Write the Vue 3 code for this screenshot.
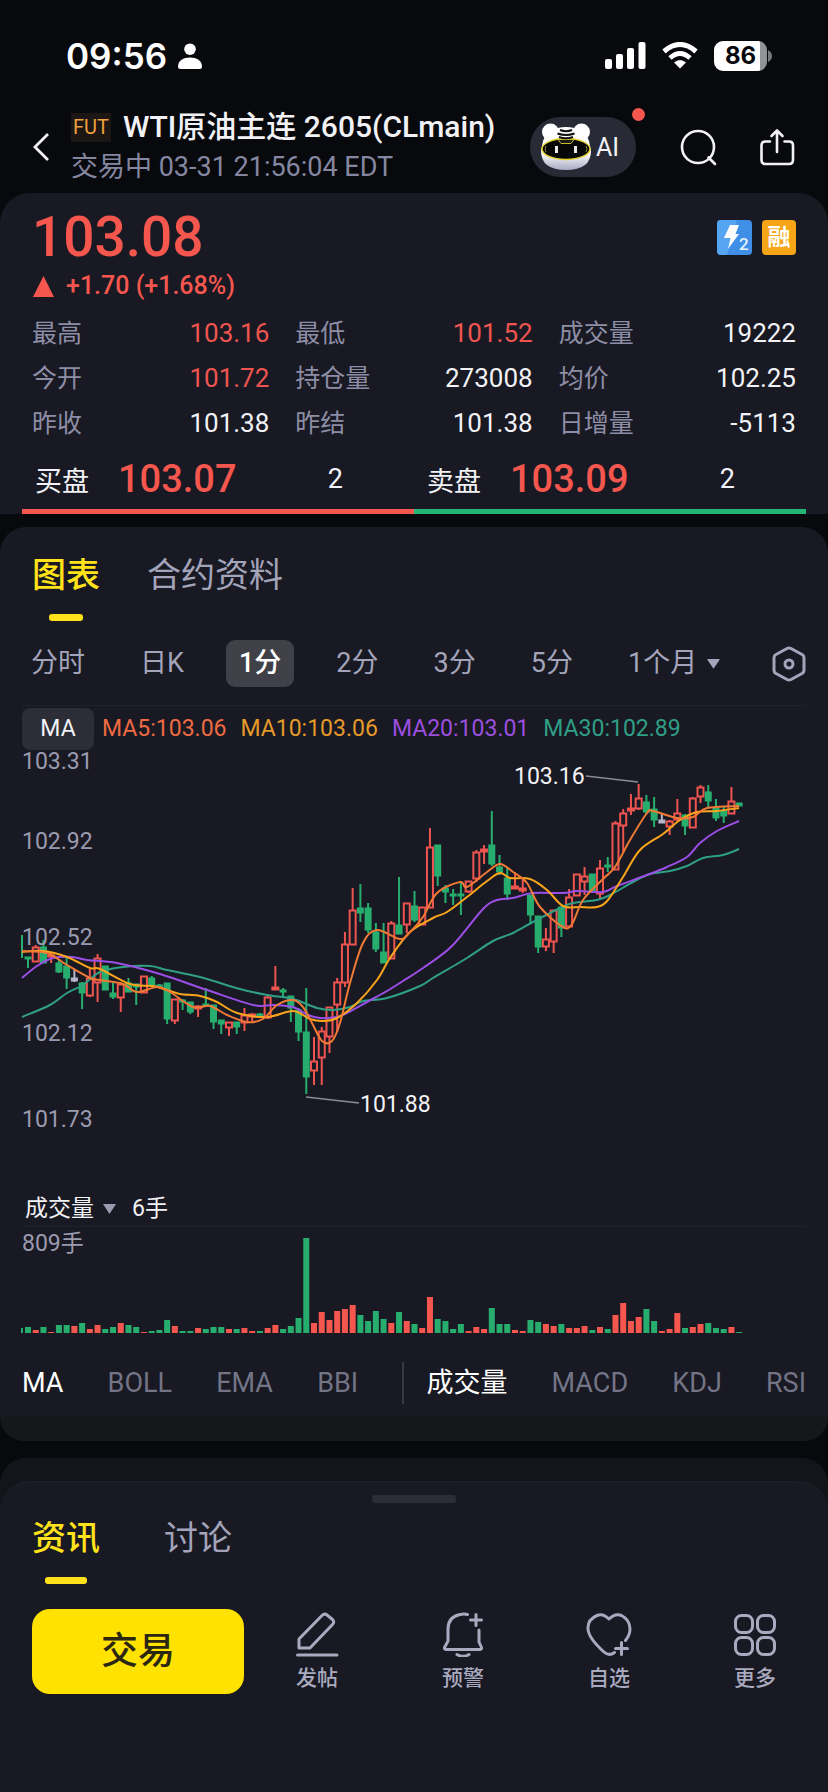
<script setup>
import { ref } from 'vue'

const stats = [
  { label: '最高', value: '103.16', up: true },
  { label: '最低', value: '101.52', up: true },
  { label: '成交量', value: '19222' },
  { label: '今开', value: '101.72', up: true },
  { label: '持仓量', value: '273008' },
  { label: '均价', value: '102.25' },
  { label: '昨收', value: '101.38' },
  { label: '昨结', value: '101.38' },
  { label: '日增量', value: '-5113' }
]

const periods = ['分时', '日K', '1分', '2分', '3分', '5分']
const period = ref('1分')
const longPeriod = ref('1个月')
const chartTab = ref('图表')
const feedTab = ref('资讯')
const subChart = ref('成交量')

const legend = [
  { name: 'ma5', text: 'MA5:103.06' },
  { name: 'ma10', text: 'MA10:103.06' },
  { name: 'ma20', text: 'MA20:103.01' },
  { name: 'ma30', text: 'MA30:102.89' }
]

const axis = [
  { y: 769, text: '103.31' },
  { y: 849, text: '102.92' },
  { y: 945, text: '102.52' },
  { y: 1041, text: '102.12' },
  { y: 1127, text: '101.73' }
]

// colour, high, body top, body bottom, low, volume bar height
const rows = [
  ['g', 957, 957, 959, 968, 6], ['r', 945, 947, 962, 962, 3], ['g', 940, 947, 963, 963, 6],
  ['r', 953, 955, 957, 963, 1], ['g', 960, 963, 972, 973, 8], ['g', 958, 966, 978, 989, 8],
  ['w', 969, 978, 981, 982, 7], ['g', 982, 983, 993, 1009, 10], ['r', 969, 978, 996, 997, 4],
  ['r', 954, 958, 983, 1002, 8], ['g', 966, 966, 990, 990, 4], ['g', 981, 993, 997, 999, 6],
  ['r', 982, 984, 998, 1012, 10], ['g', 978, 983, 992, 992, 8], ['g', 984, 984, 987, 1005, 6],
  ['r', 976, 976, 993, 993, 1], ['g', 976, 978, 985, 986, 2], ['g', 984, 985, 987, 988, 3],
  ['g', 983, 983, 1019, 1024, 13], ['r', 999, 999, 1021, 1024, 7], ['g', 999, 1000, 1002, 1010, 2],
  ['g', 1002, 1002, 1012, 1014, 2], ['r', 1005, 1006, 1009, 1017, 5], ['g', 988, 1004, 1006, 1006, 4],
  ['g', 1005, 1005, 1022, 1029, 6], ['g', 1020, 1020, 1024, 1034, 6], ['r', 1022, 1022, 1028, 1036, 4],
  ['g', 1022, 1022, 1027, 1034, 4], ['r', 1008, 1015, 1023, 1031, 5], ['r', 1013, 1014, 1017, 1021, 2],
  ['g', 1013, 1014, 1016, 1017, 2], ['r', 994, 997, 1018, 1019, 5], ['r', 966, 987, 990, 990, 8],
  ['g', 988, 990, 992, 997, 4], ['g', 996, 996, 1008, 1022, 7], ['g', 1008, 1010, 1032, 1041, 15],
  ['g', 988, 1032, 1077, 1094, 95], ['r', 1037, 1061, 1071, 1085, 10], ['r', 1027, 1031, 1058, 1085, 21],
  ['r', 1007, 1007, 1037, 1053, 13], ['r', 978, 982, 1005, 1032, 22], ['r', 932, 944, 983, 987, 24],
  ['r', 888, 910, 945, 945, 28], ['g', 884, 908, 913, 922, 18], ['g', 903, 908, 930, 933, 12],
  ['g', 923, 932, 949, 952, 22], ['g', 923, 952, 963, 963, 14], ['r', 921, 923, 959, 959, 10],
  ['g', 877, 925, 934, 934, 21], ['r', 903, 903, 925, 933, 12], ['g', 891, 906, 920, 922, 9],
  ['r', 907, 907, 925, 925, 5], ['r', 828, 847, 908, 908, 36], ['g', 845, 845, 876, 886, 14],
  ['g', 885, 888, 892, 903, 12], ['g', 889, 894, 896, 905, 4], ['g', 883, 894, 896, 915, 9],
  ['r', 881, 881, 892, 893, 2], ['r', 850, 852, 879, 882, 6], ['r', 845, 849, 852, 864, 4],
  ['g', 811, 845, 864, 866, 25], ['g', 855, 867, 872, 875, 9], ['g', 867, 878, 894, 900, 9],
  ['r', 872, 886, 889, 889, 3], ['r', 878, 888, 891, 893, 2], ['g', 895, 895, 915, 924, 13],
  ['g', 916, 916, 947, 953, 11], ['r', 928, 939, 947, 951, 9], ['r', 910, 910, 942, 953, 7],
  ['g', 907, 907, 928, 937, 9], ['r', 889, 897, 927, 927, 5], ['r', 874, 874, 896, 896, 5],
  ['r', 867, 876, 882, 895, 7], ['g', 874, 874, 892, 892, 3], ['r', 860, 868, 894, 900, 6],
  ['g', 857, 865, 867, 872, 4], ['r', 821, 823, 870, 870, 18], ['r', 809, 813, 826, 852, 30],
  ['r', 794, 808, 811, 815, 12], ['r', 784, 798, 809, 810, 16], ['g', 795, 802, 812, 814, 24],
  ['g', 797, 809, 820, 827, 12], ['w', 814, 820, 823, 823, 2], ['r', 820, 821, 827, 835, 4],
  ['r', 799, 813, 820, 821, 20], ['g', 814, 815, 826, 835, 5], ['r', 797, 798, 828, 828, 6],
  ['r', 785, 787, 797, 803, 9], ['g', 785, 792, 801, 808, 10], ['g', 799, 808, 818, 821, 5],
  ['g', 807, 811, 816, 823, 4], ['r', 787, 801, 814, 814, 6], ['g', 803, 803, 806, 806, 1]
]
const candles = rows.map(([tone, high, top, bottom, low, volume], i) => ({
  tone, high, top, bottom, low, volume, x: 28 + i * 7.73
}))

const averages = {
  ma30: '22,1017 50,1005 67,993 83,985 100,972 123,967 150,966 167,970 200,977 240,989 267,995 293,999 317,1008 333,1010 350,1007 363,1001 387,998 420,986 433,978 467,958 493,941 513,933 533,922 560,908 573,903 597,900 610,895 633,882 650,874 670,871 687,866 703,858 723,855 739,849',
  ma20: '22,978 37,966 53,958 72,957 87,960 117,963 160,974 207,990 253,1005 273,1005 293,1007 308,1015 320,1018 337,1017 345,1014 367,1002 387,991 403,981 423,968 452,946 483,909 497,900 513,898 533,893 563,893 577,891 603,892 617,886 647,875 667,867 687,857 700,843 717,831 739,821',
  ma10: '22,952 43,951 67,957 90,968 100,969 130,984 153,986 167,990 180,994 200,996 217,1002 237,1013 267,1017 293,1011 310,1019 323,1021 337,1018 357,1003 377,980 390,958 410,932 433,918 447,912 467,897 487,881 500,873 510,878 530,879 547,890 563,906 580,907 597,907 608,900 623,877 640,850 663,834 680,820 697,812 717,811 739,808',
  ma5: '22,951 47,953 67,965 90,978 100,980 123,984 137,992 157,987 170,992 193,1007 210,1006 227,1015 247,1022 263,1019 277,1005 293,1000 303,1007 312,1023 322,1041 332,1041 340,1023 350,983 363,943 377,930 400,939 410,932 423,917 437,893 460,882 467,887 487,872 500,864 513,872 527,883 540,907 563,927 572,924 583,900 603,879 615,867 630,840 647,813 653,811 677,818 693,817 707,808 739,806'
}

// Smooth curve through the points (Catmull-Rom converted to Bézier segments)
function smooth(text) {
  const p = text.split(' ').map((pair) => pair.split(',').map(Number))
  let d = `M${p[0]}`
  for (let i = 0; i < p.length - 1; i++) {
    const a = p[i - 1] || p[i]
    const b = p[i]
    const c = p[i + 1]
    const e = p[i + 2] || c
    d += `C${b[0] + (c[0] - a[0]) / 6},${b[1] + (c[1] - a[1]) / 6} ${c[0] - (e[0] - b[0]) / 6},${c[1] - (e[1] - b[1]) / 6} ${c}`
  }
  return d
}
const lines = Object.entries(averages).map(([name, text]) => ({ name, d: smooth(text) }))

const mainIndicators = ['MA', 'BOLL', 'EMA', 'BBI']
const subIndicators = ['成交量', 'MACD', 'KDJ', 'RSI']
const mainIndicator = ref('MA')
</script>

<template>
  <div class="page">
    <div class="status">
      <span class="clock">09:56</span>
      <svg class="person" width="24" height="26" viewBox="0 0 24 26" fill="currentColor">
        <circle cx="12" cy="6.2" r="5.8" />
        <path d="M0 23.5C0 17.5 5.5 14.5 12 14.5S24 17.5 24 23.5Q24 26 21.500 26H2.500Q0 26 0 23.500Z" />
      </svg>
      <div class="signals">
        <svg width="42" height="28" viewBox="0 0 42 28" fill="currentColor">
          <rect x="1" y="17" width="7" height="10" rx="2" />
          <rect x="12" y="12" width="7" height="15" rx="2" />
          <rect x="23" y="6" width="7" height="21" rx="2" />
          <rect x="34.500" y="0" width="7" height="27" rx="2" />
        </svg>
        <svg width="36" height="28" viewBox="0 0 36 28" fill="none" stroke="currentColor" stroke-width="5">
          <path d="M2 9.500Q18 -4.500 34 9.500" />
          <path d="M8 16Q18 7 28 16" />
          <path d="M18 26.500L12 20.500Q18 15.500 24 20.500Z" fill="currentColor" stroke="none" />
        </svg>
        <div class="battery">
          <span class="cell">86</span>
          <svg width="4" height="12" viewBox="0 0 4 12"><path d="M0 0Q4 2 4 6T0 12Z" fill="#77787b" /></svg>
        </div>
      </div>
    </div>

    <header class="header">
      <button class="icon-button" aria-label="返回">
        <svg width="16" height="28" viewBox="0 0 16 28" fill="none" stroke="currentColor" stroke-width="2.800"><path d="M15 1L2 14L15 27" /></svg>
      </button>
      <div class="heading">
        <div class="title-row">
          <span class="fut">FUT</span>
          <h1>WTI原油主连 2605(CLmain)</h1>
        </div>
        <p>交易中 03-31 21:56:04 EDT</p>
      </div>
      <button class="ai">
        <svg width="52" height="48" viewBox="0 0 52 48">
          <defs>
            <linearGradient id="chin" x1="0" y1="0" x2="0" y2="1"><stop offset=".6" stop-color="#fff" /><stop offset="1" stop-color="#a9a9c4" /></linearGradient>
          </defs>
          <circle cx="10.500" cy="9" r="8.500" fill="#fff" />
          <circle cx="41.500" cy="9" r="8.500" fill="#fff" />
          <path d="M3 18Q8 4 26 4T49 18L51 28Q51 47 26 47T1 28Z" fill="url(#chin)" />
          <ellipse cx="26" cy="26" rx="24" ry="10.500" fill="#070707" stroke="#e5d233" stroke-width="1.500" />
          <path d="M18 16.500H34L31 20.500H21Z" fill="#1a1a14" stroke="#c9b82a" />
          <path d="M20 7Q26 9.500 32 7M17.500 10.500Q26 13.500 34.500 10.500M19 14Q26 16.500 33 14" fill="none" stroke="#111" stroke-width="2.200" />
          <path d="M16.500 23V30M35.500 23V30" stroke="#e8e8ec" stroke-width="3" />
          <path d="M6 23Q4 26 6 29M46 23Q48 26 46 29" stroke="#8a8230" fill="none" />
        </svg>
        <span>AI</span>
        <i class="dot"></i>
      </button>
      <button class="icon-button search" aria-label="搜索">
        <svg width="38" height="38" viewBox="0 0 38 38" fill="none" stroke="currentColor" stroke-width="2.600" stroke-linecap="round"><circle cx="18" cy="19" r="16" /><path d="M28.500 29.500L35 36" /></svg>
      </button>
      <button class="icon-button share" aria-label="分享">
        <svg width="36" height="38" viewBox="0 0 36 38" fill="none" stroke="currentColor" stroke-width="2.600" stroke-linecap="round" stroke-linejoin="round">
          <path d="M11 13.500H6.500Q2.500 13.500 2.500 17.500V32Q2.500 36 6.500 36H30Q34 36 34 32V17.500Q34 13.500 30 13.500H25.500" />
          <path d="M18 24V2.500M12.500 8L18 2.500L23.500 8" />
        </svg>
      </button>
    </header>

    <section class="card quote">
      <div class="price-row">
        <strong class="price">103.08</strong>
        <svg width="35" height="35" viewBox="0 0 35 35" class="mark">
          <rect width="35" height="35" rx="4" fill="#3f8fe6" />
          <path d="M0 4Q0 0 4 0H20L10 35H4Q0 35 0 31Z" fill="#55a5f2" />
          <path d="M13 5H22L18.500 14H22L11 29L13.500 18H7Z" fill="#fff" />
          <text x="22" y="30" font-size="17" fill="#e9f4ff" class="mark-digit">2</text>
        </svg>
        <span class="margin-mark">融</span>
      </div>
      <div class="change">
        <svg width="21" height="21" viewBox="0 0 21 21" fill="currentColor"><path d="M10.500 0L21 21H0Z" /></svg>
        <span>+1.70 (+1.68%)</span>
      </div>
      <dl class="stats">
        <div v-for="s in stats" :key="s.label">
          <dt>{{ s.label }}</dt>
          <dd :class="{ up: s.up }">{{ s.value }}</dd>
        </div>
      </dl>
      <div class="book">
        <div class="side"><span class="side-name">买盘</span><strong>103.07</strong><span class="lots">2</span></div>
        <div class="side ask"><span class="side-name">卖盘</span><strong>103.09</strong><span class="lots">2</span></div>
      </div>
    </section>

    <section class="card chart-card">
      <nav class="tabs">
        <button v-for="t in ['图表', '合约资料']" :key="t" :class="{ on: chartTab === t }" @click="chartTab = t">{{ t }}</button>
      </nav>
      <div class="periods">
        <button v-for="p in periods" :key="p" :class="{ on: period === p }" @click="period = p">{{ p }}</button>
        <label class="picker">
          <select v-model="longPeriod" aria-label="周期"><option>1个月</option><option>1周</option></select>
          <svg width="13" height="10" viewBox="0 0 13 10"><path d="M1 0H12Q13 0 12.500 1L7 9Q6.500 10 6 9L.5 1Q0 0 1 0Z" fill="currentColor" /></svg>
        </label>
        <button class="icon-button gear" aria-label="设置">
          <svg width="34" height="36" viewBox="0 0 34 36" fill="none" stroke="currentColor" stroke-width="3" stroke-linejoin="round">
            <path d="M15 2.500Q17 1.500 19 2.500L30 8.500Q32 9.500 32 12V24Q32 26.500 30 27.500L19 33.500Q17 34.500 15 33.500L4 27.500Q2 26.500 2 24V12Q2 9.500 4 8.500Z" />
            <circle cx="17" cy="18" r="4" />
          </svg>
        </button>
      </div>

      <div class="plot">
        <div class="legend">
          <button class="ma-chip">MA</button>
          <span v-for="l in legend" :key="l.name" :class="l.name">{{ l.text }}</span>
        </div>
        <svg class="canvas" viewBox="22 750 784 440">
          <path d="M22 840H760M22 937H760" class="grid" />
          <path d="M22 935V958" stroke="#27ae6f" stroke-width="2" />
          <g v-for="(c, i) in candles" :key="i" :class="['candle', c.tone]">
            <path :d="`M${c.x} ${c.high}V${c.top}M${c.x} ${c.bottom}V${c.low}`" />
            <rect :x="c.x - (c.tone === 'r' ? 3 : 2.5)" :y="c.top + 0.5" :width="c.tone === 'r' ? 6 : 5" :height="Math.max(1, c.bottom - c.top - 1)" />
          </g>
          <path v-for="l in lines" :key="l.name" :d="l.d" :class="['line', l.name]" />
          <text v-for="a in axis" :key="a.text" x="22" :y="a.y" class="axis">{{ a.text }}</text>
          <path d="M586 776L638 782M306 1097L359 1103" stroke="#8b8b93" stroke-width="1.500" />
          <text x="514" y="784" class="callout">103.16</text>
          <text x="360" y="1112" class="callout">101.88</text>
        </svg>
        <div class="sub-head">
          <label class="picker">
            <select v-model="subChart" aria-label="副图指标"><option>成交量</option><option>MACD</option></select>
            <svg width="13" height="10" viewBox="0 0 13 10"><path d="M0 0H13L6.500 10Z" fill="#9b9bb0" /></svg>
          </label>
          <span>6手</span>
        </div>
        <svg class="canvas" viewBox="22 1227 784 110">
          <text x="22" y="1251" class="axis">809手</text>
          <rect x="21" y="1328" width="2" height="5" fill="#27ae6f" />
          <rect v-for="(c, i) in candles" :key="i" :x="c.x - 3" :y="1333 - c.volume" width="6" :height="c.volume" :fill="c.tone === 'g' ? '#27ae6f' : '#f5574f'" />
        </svg>
        <div class="indicators">
          <button v-for="n in mainIndicators" :key="n" :class="{ on: mainIndicator === n }" @click="mainIndicator = n">{{ n }}</button>
          <i class="divider"></i>
          <button v-for="n in subIndicators" :key="n" :class="{ on: subChart === n }" @click="subChart = n">{{ n }}</button>
        </div>
      </div>
      <div class="foot"></div>
    </section>

    <section class="behind">
      <div class="sheet">
        <div class="handle"></div>
        <nav class="tabs feed">
          <button v-for="t in ['资讯', '讨论']" :key="t" :class="{ on: feedTab === t }" @click="feedTab = t">{{ t }}</button>
        </nav>
        <div class="actions">
          <button class="trade">交易</button>
          <button class="action">
            <svg width="46" height="46" viewBox="0 0 46 46"><path d="M5 37V28L28 4.500Q30.500 2 33 4L38.500 8.500Q41 11 38.500 13.500L16 37ZM3.500 44H43" /></svg>
            <span>发帖</span>
          </button>
          <button class="action">
            <svg width="46" height="46" viewBox="0 0 46 46"><path d="M27.500 3.500Q24 2.500 20 3.500Q8 6 8 18V30L4.500 36.500Q4 38.500 6.500 38.500H39.500Q42 38.500 41.500 36.500L39 31V19M17 43.500Q23 47 29 43.500M36 3.500V14.500M30.500 9H41.500" /></svg>
            <span>预警</span>
          </button>
          <button class="action">
            <svg width="46" height="46" viewBox="0 0 46 46"><path d="M23 8Q17 2 11 4.500Q1.500 8.500 2 18Q2.500 27 18 41Q23 45.500 28.500 41.500M23 8Q29 2 35.500 4.500Q44 9 44 18Q44 24 39.500 29.500M35.500 31.500V43.500M29.500 37.500H41.500" /></svg>
            <span>自选</span>
          </button>
          <button class="action">
            <svg width="46" height="46" viewBox="0 0 46 46"><rect x="3.500" y="4.500" width="17" height="17" rx="6" /><rect x="25.500" y="4.500" width="17" height="17" rx="6" /><rect x="3.500" y="26.500" width="17" height="17" rx="6" /><rect x="25.500" y="26.500" width="17" height="17" rx="6" /></svg>
            <span>更多</span>
          </button>
        </div>
      </div>
    </section>
  </div>
</template>

<style>
body { background: #07080c; }
</style>

<style scoped>
.page {
  min-height: 100vh;
  display: flex;
  flex-direction: column;
  background: #08090d;
  color: #f2f2f6;
  font-family: Roboto, "Noto Sans CJK SC", sans-serif;
  overflow: hidden;
}
button, select {
  font: inherit;
  color: inherit;
  background: none;
  border: 0;
  padding: 0;
  margin: 0;
  appearance: none;
  white-space: nowrap;
}
svg { display: block; flex: none; }
h1, p, dl, dd { margin: 0; }
.status {
  display: flex;
  align-items: center;
  height: 48px;
  padding: 32px 56px 0 66px;
  color: #fff;
}
.clock { font: 600 35px/48px Inter, sans-serif; }
.person { margin-left: 11px; }
.signals { margin-left: auto; display: flex; align-items: center; gap: 16px; }
.battery { display: flex; align-items: center; gap: 1px; }
.cell {
  width: 53px;
  height: 30px;
  border-radius: 9px;
  background: linear-gradient(90deg, #fff 87%, #929395 87%);
  color: #08090d;
  font: 700 24px/30px Inter, sans-serif;
  text-align: center;
}
.header { display: flex; align-items: center; padding: 27px 33px 6px; }
.icon-button { display: flex; }
.heading { flex: 1; min-width: 0; margin-left: 22px; }
.title-row { display: flex; align-items: center; gap: 12px; }
.fut {
  padding: 0 2px;
  background: #1c1614;
  color: #f0a03c;
  font-size: 20px;
  line-height: 29px;
}
h1 { font-size: 30px; line-height: 40px; font-weight: 500; white-space: nowrap; }
.heading p { font-size: 27px; line-height: 40px; color: #8587a0; white-space: nowrap; }
.ai {
  position: relative;
  display: flex;
  align-items: center;
  gap: 4px;
  height: 60px;
  padding: 0 17px 0 10px;
  border-radius: 30px;
  background: #282b35;
  font-size: 25px;
}
.dot { position: absolute; right: -9px; top: -9px; width: 13px; height: 13px; border-radius: 50%; background: #f5574f; }
.search { margin-left: 44px; }
.share { margin-left: 41px; }
.card { background: #181922; }
.quote { border-radius: 30px 30px 0 0; padding: 14px 22px 0; }
.price-row { display: flex; align-items: center; padding: 0 10px; color: #f5574f; }
.price { flex: 1; font-size: 55px; line-height: 60px; font-weight: 500; }
.mark-digit { font-family: Roboto, sans-serif; font-weight: 500; }
.margin-mark {
  margin-left: 10px;
  width: 34px;
  border-radius: 4px;
  background: #f5a516;
  color: #fff;
  font-size: 23px;
  line-height: 35px;
  font-weight: 700;
  text-align: center;
}
.change { display: flex; align-items: center; gap: 12px; margin: 2px 11px 8px; color: #f5574f; font-size: 25px; line-height: 34px; font-weight: 500; }
.stats { display: grid; grid-template-columns: repeat(3, 1fr); column-gap: 26px; padding: 0 10px; }
.stats div { display: flex; justify-content: space-between; line-height: 45px; }
dt { font-size: 25px; color: #8d8ea6; }
dd { font-size: 26px; }
.up { color: #ee5550; }
.book { display: flex; margin-top: 3px; }
.side { flex: 1; display: flex; align-items: center; height: 60px; padding: 0 71px 0 13px; border-bottom: 5px solid #f5574f; font-size: 27px; }
.ask { border-color: #22b573; }
.side strong { margin-left: 29px; color: #f5574f; font-size: 38px; font-weight: 500; }
.lots { margin-left: auto; }
.chart-card { margin-top: 13px; border-radius: 26px; padding-top: 28px; }
.tabs { display: flex; gap: 47px; padding: 0 32px; font-size: 34px; line-height: 40px; color: #a3a4ba; }
.tabs button { display: flex; flex-direction: column; align-items: center; gap: 19px; line-height: 40px; }
.tabs button::after { content: ""; width: 34px; height: 7px; border-radius: 3px; }
.tabs .on { color: #ffe21a; font-weight: 500; }
.tabs .on::after { background: #ffe21a; }
.periods { display: flex; justify-content: space-between; align-items: center; padding: 0 22px 0 18px; margin: 19px 0 18px; font-size: 27px; line-height: 47px; color: #a3a4ba; }
.periods button { padding: 0 13px; border-radius: 9px; }
.periods .on { background: #404148; color: #fff; font-weight: 500; }
.periods .gear { padding: 0 0 0 10px; }
.picker { display: flex; align-items: center; gap: 9px; }
.periods .picker { padding: 0 13px; }
.plot { margin: 0 22px; border-top: 1px solid #20212a; padding-top: 2px; }
.legend { display: flex; gap: 14px; font-size: 23px; line-height: 42px; white-space: nowrap; }
.ma-chip { width: 72px; margin-right: -6px; border-radius: 8px; background: #2c2d37; }
.ma5 { color: #ee6a42; stroke: #f07a35; }
.ma10 { color: #e59a2a; stroke: #faa51c; }
.ma20 { color: #9b4fdf; stroke: #9b4fe6; }
.ma30 { color: #2f9f85; stroke: #2f9f85; }
.canvas { width: 100%; height: auto; overflow: visible; font-family: Roboto, "Noto Sans CJK SC", sans-serif; font-size: 23px; }
.axis { fill: #9b9bb0; }
.callout { fill: #f2f2f6; }
.grid { stroke: #1c1d26; }
.line { fill: none; stroke-width: 2; }
.candle { stroke-width: 2; }
.g { stroke: #27ae6f; fill: #27ae6f; }
.r { stroke: #ee5550; fill: none; }
.w { stroke: #b6b6cc; fill: #b6b6cc; }
.sub-head { display: flex; align-items: center; gap: 16px; height: 34px; padding: 2px 0 0 3px; border-bottom: 1px solid #20212a; font-size: 23px; line-height: 34px; }
.indicators { display: flex; align-items: center; justify-content: space-between; height: 68px; padding-top: 12px; font-size: 27px; line-height: 42px; color: #737486; }
.indicators .on { color: #fff; }
.divider { width: 2px; height: 42px; margin-right: -22px; background: #383943; }
.foot { height: 24px; border-radius: 0 0 26px 26px; background: #16171b; }
.behind { flex: 1; display: flex; flex-direction: column; margin-top: 17px; border-radius: 26px 26px 0 0; background: #14151b; padding-top: 23px; }
.sheet { flex: 1; border-top: 2px solid #1d1e27; border-radius: 30px 30px 0 0; background: #181922; padding: 12px 32px 60px; }
.handle { width: 84px; height: 8px; margin: 0 auto; border-radius: 3px; background: #2c2e37; }
.feed { margin-top: 15px; padding: 0; gap: 64px; }
.feed button::after { width: 42px; }
.actions { display: flex; align-items: center; margin: 25px -32px 0 0; }
.trade { flex: none; width: 212px; border-radius: 18px; background: #ffe200; color: #2b2710; font-size: 37px; line-height: 85px; font-weight: 500; }
.action { flex: 1; display: flex; flex-direction: column; align-items: center; gap: 6px; color: #a9aabf; font-size: 21px; line-height: 30px; font-weight: 500; }
.action svg { fill: none; stroke: currentColor; stroke-width: 3; stroke-linecap: round; stroke-linejoin: round; }
</style>
